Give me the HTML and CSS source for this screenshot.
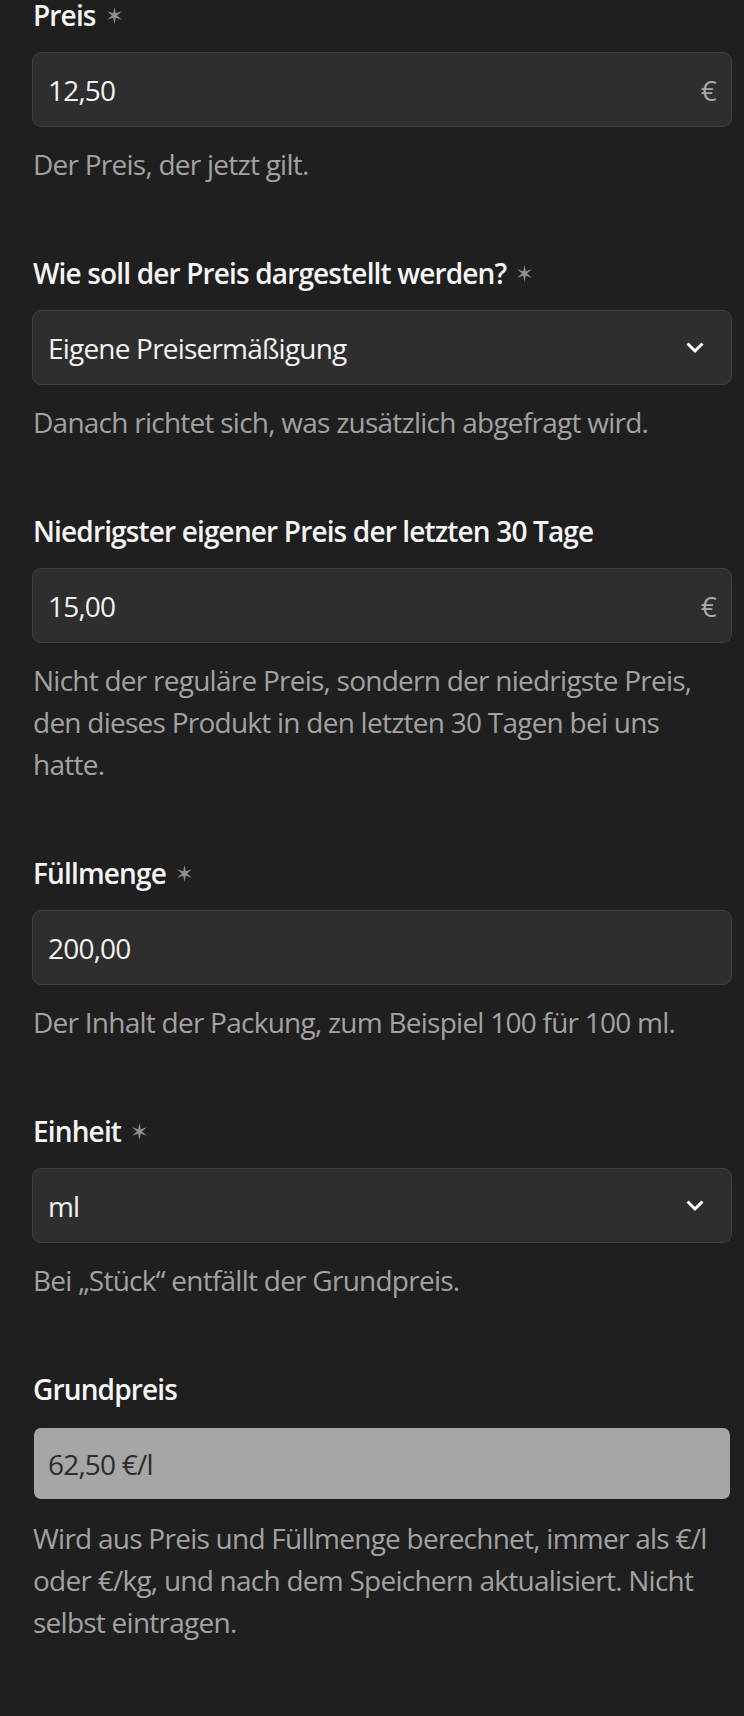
FILE: index.html
```html
<!DOCTYPE html>
<html lang="de">
<head>
<meta charset="utf-8">
<title>Preisangaben</title>
<link rel="stylesheet" href="styles.css">
</head>
<body>
<main class="form">
  <div class="field">
    <div class="label">Preis <svg class="req" viewBox="0 0 16 16" width="17" height="17"><polygon points="8,0 9.2,5.9 14.93,4 10.4,8 14.93,12 9.2,10.1 8,16 6.8,10.1 1.07,12 5.6,8 1.07,4 6.8,5.9"/></svg></div>
    <div class="control"><span>12,50</span><span class="suffix">€</span></div>
    <p class="help">Der Preis, der jetzt gilt.</p>
  </div>
  <div class="field">
    <div class="label">Wie soll der Preis dargestellt werden? <svg class="req" viewBox="0 0 16 16" width="17" height="17"><polygon points="8,0 9.2,5.9 14.93,4 10.4,8 14.93,12 9.2,10.1 8,16 6.8,10.1 1.07,12 5.6,8 1.07,4 6.8,5.9"/></svg></div>
    <div class="control select"><span>Eigene Preisermäßigung</span><svg class="chev" viewBox="0 0 20 13" width="20" height="13"><path d="M2.5 2.5 L10 10 L17.5 2.5"/></svg></div>
    <p class="help">Danach richtet sich, was zusätzlich abgefragt wird.</p>
  </div>
  <div class="field">
    <div class="label">Niedrigster eigener Preis der letzten 30 Tage</div>
    <div class="control"><span>15,00</span><span class="suffix">€</span></div>
    <p class="help">Nicht der reguläre Preis, sondern der niedrigste Preis, den dieses Produkt in den letzten 30 Tagen bei uns hatte.</p>
  </div>
  <div class="field">
    <div class="label">Füllmenge <svg class="req" viewBox="0 0 16 16" width="17" height="17"><polygon points="8,0 9.2,5.9 14.93,4 10.4,8 14.93,12 9.2,10.1 8,16 6.8,10.1 1.07,12 5.6,8 1.07,4 6.8,5.9"/></svg></div>
    <div class="control"><span>200,00</span></div>
    <p class="help">Der Inhalt der Packung, zum Beispiel 100 für 100 ml.</p>
  </div>
  <div class="field">
    <div class="label">Einheit <svg class="req" viewBox="0 0 16 16" width="17" height="17"><polygon points="8,0 9.2,5.9 14.93,4 10.4,8 14.93,12 9.2,10.1 8,16 6.8,10.1 1.07,12 5.6,8 1.07,4 6.8,5.9"/></svg></div>
    <div class="control select"><span>ml</span><svg class="chev" viewBox="0 0 20 13" width="20" height="13"><path d="M2.5 2.5 L10 10 L17.5 2.5"/></svg></div>
    <p class="help">Bei „Stück“ entfällt der Grundpreis.</p>
  </div>
  <div class="field">
    <div class="label">Grundpreis</div>
    <div class="control readonly"><span>62,50 €/l</span></div>
    <p class="help">Wird aus Preis und Füllmenge berechnet, immer als €/l oder €/kg, und nach dem Speichern aktualisiert. Nicht selbst eintragen.</p>
  </div>
</main>
</body>
</html>
```
FILE: styles.css
```css
html, body {
  margin: 0;
  background: #1f1f1f;
}
body {
  font-family: "Open Sans", "Noto Sans", "DejaVu Sans", sans-serif;
  font-size: 28px;
  line-height: 42px;
}
.form {
  margin: -6px 12px 0 32px;
  display: flex;
  flex-direction: column;
  gap: 67px;
}
.field {
  display: flex;
  flex-direction: column;
}
.label {
  display: flex;
  align-items: center;
  gap: 10px;
  font-weight: 600;
  color: #f5f5f5;
  margin-bottom: 16px;
  padding-left: 1px;
  letter-spacing: -0.85px;
}
.req {
  fill: #8e8e8e;
  flex: none;
}
.control {
  box-sizing: border-box;
  height: 75px;
  border: 1px solid #3f3f3f;
  border-radius: 9px;
  background: #2e2e2e;
  color: #f2f2f2;
  display: flex;
  align-items: center;
  justify-content: space-between;
  padding: 0 15px;
  letter-spacing: -0.8px;
}
.suffix {
  color: #a8a8a8;
}
.select {
  padding-right: 26px;
}
.chev {
  fill: none;
  stroke: #ffffff;
  stroke-width: 3;
  flex: none;
}
.readonly {
  background: #a6a6a6;
  border: 2px solid #1f1f1f;
  color: #2c2c2c;
  padding-left: 14px;
}
.help {
  margin: 16px 0 0;
  color: #a2a2a2;
  padding-left: 1px;
  letter-spacing: -0.75px;
}
```
